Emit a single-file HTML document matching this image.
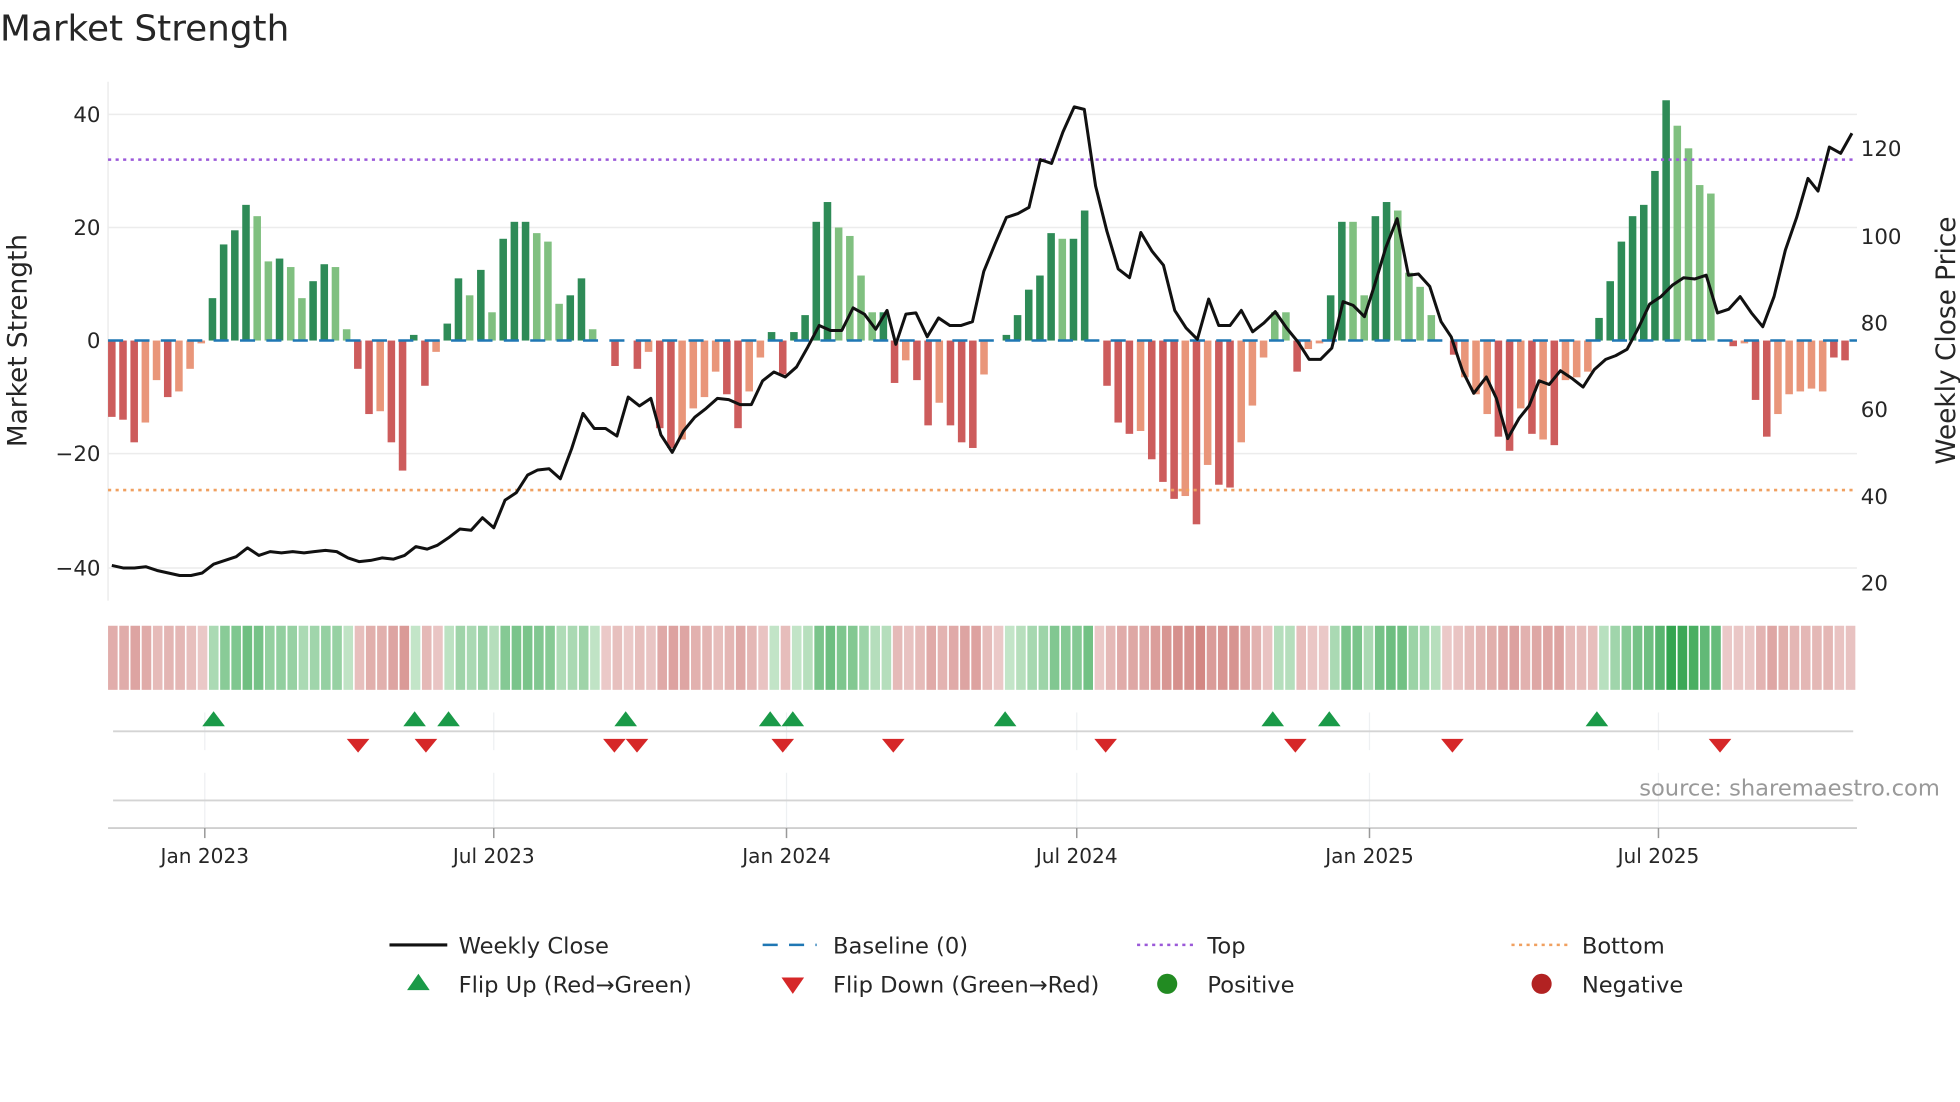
<!DOCTYPE html>
<html><head><meta charset="utf-8"><style>
html,body{margin:0;padding:0;background:#fff;width:1960px;height:1102px;overflow:hidden}
svg{display:block}
text{font-family:"DejaVu Sans","Liberation Sans",sans-serif;fill:#262626}
</style></head><body>
<svg id="s" width="1960" height="1102" viewBox="0 0 1560 877" xmlns="http://www.w3.org/2000/svg">
<rect width="1560" height="877" fill="#fff"/>
<text x="0" y="32" font-size="28.5" fill="#333">Market Strength</text>
<g stroke="#ececec" stroke-width="1.2">
<line x1="86" x2="1478" y1="91" y2="91"/><line x1="86" x2="1478" y1="181" y2="181"/>
<line x1="86" x2="1478" y1="361" y2="361"/><line x1="86" x2="1478" y1="452" y2="452"/>
<line x1="86" x2="86" y1="65" y2="478"/>
</g>
<g id="bars"></g>
<line x1="86" x2="1478" y1="271" y2="271" stroke="#1f77b4" stroke-width="2" stroke-dasharray="12,9"/>
<line x1="86" x2="1478" y1="127" y2="127" stroke="#9b59d9" stroke-width="2" stroke-dasharray="2.5,3.5"/>
<line x1="86" x2="1478" y1="390" y2="390" stroke="#f0a060" stroke-width="2" stroke-dasharray="2.5,3.5"/>
<polyline id="pl" fill="none" stroke="#111" stroke-width="2.4" stroke-linejoin="round"/>
<g font-size="17" text-anchor="end">
<text x="80" y="97">40</text><text x="80" y="187">20</text><text x="80" y="277">0</text>
<text x="80" y="367">−20</text><text x="80" y="458">−40</text></g>
<g font-size="17">
<text x="1481" y="124">120</text><text x="1481" y="194">100</text><text x="1481" y="263">80</text>
<text x="1481" y="332">60</text><text x="1481" y="401">40</text><text x="1481" y="470">20</text></g>
<text transform="translate(21,271) rotate(-90)" font-size="21" text-anchor="middle">Market Strength</text>
<text transform="translate(1556,271) rotate(-90)" font-size="21" text-anchor="middle">Weekly Close Price</text>
<g id="strip"></g>
<g stroke="#eef0f2" stroke-width="1">
<line x1="163" x2="163" y1="567" y2="597"/><line x1="393" x2="393" y1="567" y2="597"/><line x1="626" x2="626" y1="567" y2="597"/>
<line x1="857" x2="857" y1="567" y2="597"/><line x1="1090" x2="1090" y1="567" y2="597"/><line x1="1320" x2="1320" y1="567" y2="597"/>
<line x1="163" x2="163" y1="615" y2="659"/><line x1="393" x2="393" y1="615" y2="659"/><line x1="626" x2="626" y1="615" y2="659"/>
<line x1="857" x2="857" y1="615" y2="659"/><line x1="1090" x2="1090" y1="615" y2="659"/><line x1="1320" x2="1320" y1="615" y2="659"/>
</g>
<line x1="90" x2="1475" y1="582" y2="582" stroke="#d4d4d4" stroke-width="1.5"/>
<line x1="90" x2="1475" y1="637" y2="637" stroke="#d4d4d4" stroke-width="1.5"/>
<line x1="86" x2="1478" y1="659" y2="659" stroke="#cfcfcf" stroke-width="1.5"/>
<g stroke="#999" stroke-width="1.2">
<line x1="163" x2="163" y1="659" y2="667"/><line x1="393" x2="393" y1="659" y2="667"/><line x1="626" x2="626" y1="659" y2="667"/>
<line x1="857" x2="857" y1="659" y2="667"/><line x1="1090" x2="1090" y1="659" y2="667"/><line x1="1320" x2="1320" y1="659" y2="667"/></g>
<g id="mk"></g>
<g font-size="16" text-anchor="middle">
<text x="163" y="687">Jan 2023</text><text x="393" y="687">Jul 2023</text><text x="626" y="687">Jan 2024</text>
<text x="857" y="687">Jul 2024</text><text x="1090" y="687">Jan 2025</text><text x="1320" y="687">Jul 2025</text></g>
<text x="1544" y="633" font-size="18" text-anchor="end" style="fill:#999">source: sharemaestro.com</text>
<g font-size="18">
<line x1="310" x2="356" y1="752" y2="752" stroke="#111" stroke-width="2.5"/>
<text x="365" y="759">Weekly Close</text>
<line x1="607" x2="650" y1="752" y2="752" stroke="#1f77b4" stroke-width="2" stroke-dasharray="12,9"/>
<text x="663" y="759">Baseline (0)</text>
<line x1="905" x2="950" y1="752" y2="752" stroke="#9b59d9" stroke-width="2" stroke-dasharray="2.5,3.5"/>
<text x="961" y="759">Top</text>
<line x1="1203" x2="1248" y1="752" y2="752" stroke="#f0a060" stroke-width="2" stroke-dasharray="2.5,3.5"/>
<text x="1259" y="759">Bottom</text>
<polygon points="324,788 342,788 333,775" fill="#1a9a48"/>
<text x="365" y="790">Flip Up (Red→Green)</text>
<polygon points="622,778 640,778 631,791" fill="#d62728"/>
<text x="663" y="790">Flip Down (Green→Red)</text>
<circle cx="929" cy="783" r="8" fill="#228b22"/>
<text x="961" y="790">Positive</text>
<circle cx="1227" cy="783" r="8" fill="#b22222"/>
<text x="1259" y="790">Negative</text>
</g>
</svg>
<script>
var d="-13.5R,-14R,-18R,-14.5O,-7O,-10R,-9O,-5O,-0.5O,7.5D,17D,19.5D,24D,22L,14L,14.5D,13L,7.5L,10.5D,13.5D,13L,2L,-5R,-13R,-12.5O,-18R,-23R,1D,-8R,-2O,3D,11D,8L,12.5D,5L,18D,21D,21D,19L,17.5L,6.5L,8D,11D,2L,0O,-4.5R,0O,-5R,-2O,-15.5R,-19R,-17.5O,-12O,-10O,-5.5O,-9.5R,-15.5R,-9O,-3O,1.5D,-6R,1.5D,4.5D,21D,24.5D,20L,18.5L,11.5L,5L,5D,-7.5R,-3.5O,-7R,-15R,-11O,-15R,-18R,-19R,-6O,0O,1D,4.5D,9D,11.5D,19D,18L,18D,23D,0O,-8R,-14.5R,-16.5R,-16O,-21R,-25R,-28R,-27.5O,-32.5R,-22O,-25.5R,-26R,-18O,-11.5O,-3O,5L,5L,-5.5R,-1.5O,-0.5O,8D,21D,21L,8L,22D,24.5D,23L,12L,9.5L,4.5L,0O,-2.5R,-6.5O,-9.5O,-13O,-17R,-19.5R,-12O,-16.5R,-17.5O,-18.5R,-7O,-6.5O,-5.5O,4D,10.5D,17.5D,22D,24D,30D,42.5D,38L,34L,27.5L,26L,0O,-1R,-0.5O,-10.5R,-17R,-13O,-9.5O,-9O,-8.5O,-9O,-3R,-3.5R".split(",");
var C={D:"#2e8b57",L:"#80c080",R:"#cd5c5c",O:"#e9967a"};
var b="",st="";
function mix(a,c,t){var r=[];for(var i=0;i<3;i++)r.push(Math.round(a[i]+(c[i]-a[i])*t));return "rgb("+r.join(",")+")";}
var sw=(1478-86)/d.length;
for(var i=0;i<d.length;i++){var v=parseFloat(d[i]),c=d[i].slice(-1),x=89+i*8.9;
 var y0=271,y1=271-v*4.5;
 if(Math.abs(v)>0.2) b+='<rect x="'+(x-3)+'" y="'+Math.min(y0,y1)+'" width="6" height="'+Math.abs(y1-y0)+'" fill="'+C[c]+'"/>';
 var t=Math.min(1,0.15+Math.abs(v)/40*0.85), col=v>0?mix([225,242,225],[52,165,80],t):mix([240,215,215],[205,120,115],t);
 st+='<rect x="'+(86+i*sw)+'" y="498" width="'+(sw-1.3)+'" height="51" fill="'+col+'"/>';}
document.getElementById("bars").innerHTML=b;document.getElementById("strip").innerHTML=st;
var p=[[89,450],[98,452],[107,452],[116,451],[125,454],[134,456],[143,458],[152,458],[161,456],[170,449],[179,446],[188,443],[197,436],[206,442],[215,439],[224,440],[233,439],[242,440],[250,439],[259,438],[268,439],[277,444],[286,447],[295,446],[304,444],[313,445],[322,442],[331,435],[340,437],[348,434],[357,428],[366,421],[375,422],[384,412],[393,420],[402,398],[411,392],[420,378],[428,374],[437,373],[446,381],[455,357],[464,329],[473,341],[482,341],[491,347],[500,316],[509,323],[518,317],[526,346],[535,360],[544,343],[553,332],[562,325],[571,317],[580,318],[589,322],[598,322],[607,303],[616,296],[625,300],[634,292],[643,276],[652,259],[661,263],[670,263],[679,245],[688,250],[697,262],[706,247],[713,274],[721,250],[729,249],[738,268],[747,253],[756,259],[765,259],[774,256],[783,216],[792,194],[801,173],[810,170],[819,165],[828,127],[837,130],[846,105],[855,85],[863,87],[872,148],[881,184],[890,214],[899,221],[908,185],[917,200],[926,211],[935,247],[944,261],[953,270],[962,238],[970,259],[979,259],[988,247],[997,264],[1006,257],[1015,248],[1024,261],[1033,272],[1042,286],[1051,286],[1060,277],[1069,240],[1077,243],[1086,252],[1094,227],[1103,197],[1112,174],[1121,219],[1129,218],[1138,228],[1147,256],[1155,268],[1164,295],[1173,313],[1183,300],[1191,317],[1200,349],[1209,333],[1217,323],[1225,303],[1233,306],[1242,295],[1251,301],[1260,308],[1269,294],[1278,286],[1286,283],[1295,278],[1304,261],[1313,242],[1322,236],[1331,227],[1340,221],[1349,222],[1358,219],[1367,249],[1376,246],[1385,236],[1394,249],[1403,260],[1412,236],[1421,199],[1430,173],[1439,142],[1447,152],[1456,117],[1465,122],[1474,106]];
document.getElementById("pl").setAttribute("points",p.map(function(a){return a.join(",")}).join(" "));
var m="";[170,330,357,498,613,631,800,1013,1058,1271].forEach(function(x){m+='<polygon points="'+(x-9)+',578 '+(x+9)+',578 '+x+',566" fill="#1a9a48"/>';});
[285,339,489,507,623,711,880,1031,1156,1369].forEach(function(x){m+='<polygon points="'+(x-9)+',588 '+(x+9)+',588 '+x+',599" fill="#d62728"/>';});
document.getElementById("mk").innerHTML=m;
</script>
</body></html>
